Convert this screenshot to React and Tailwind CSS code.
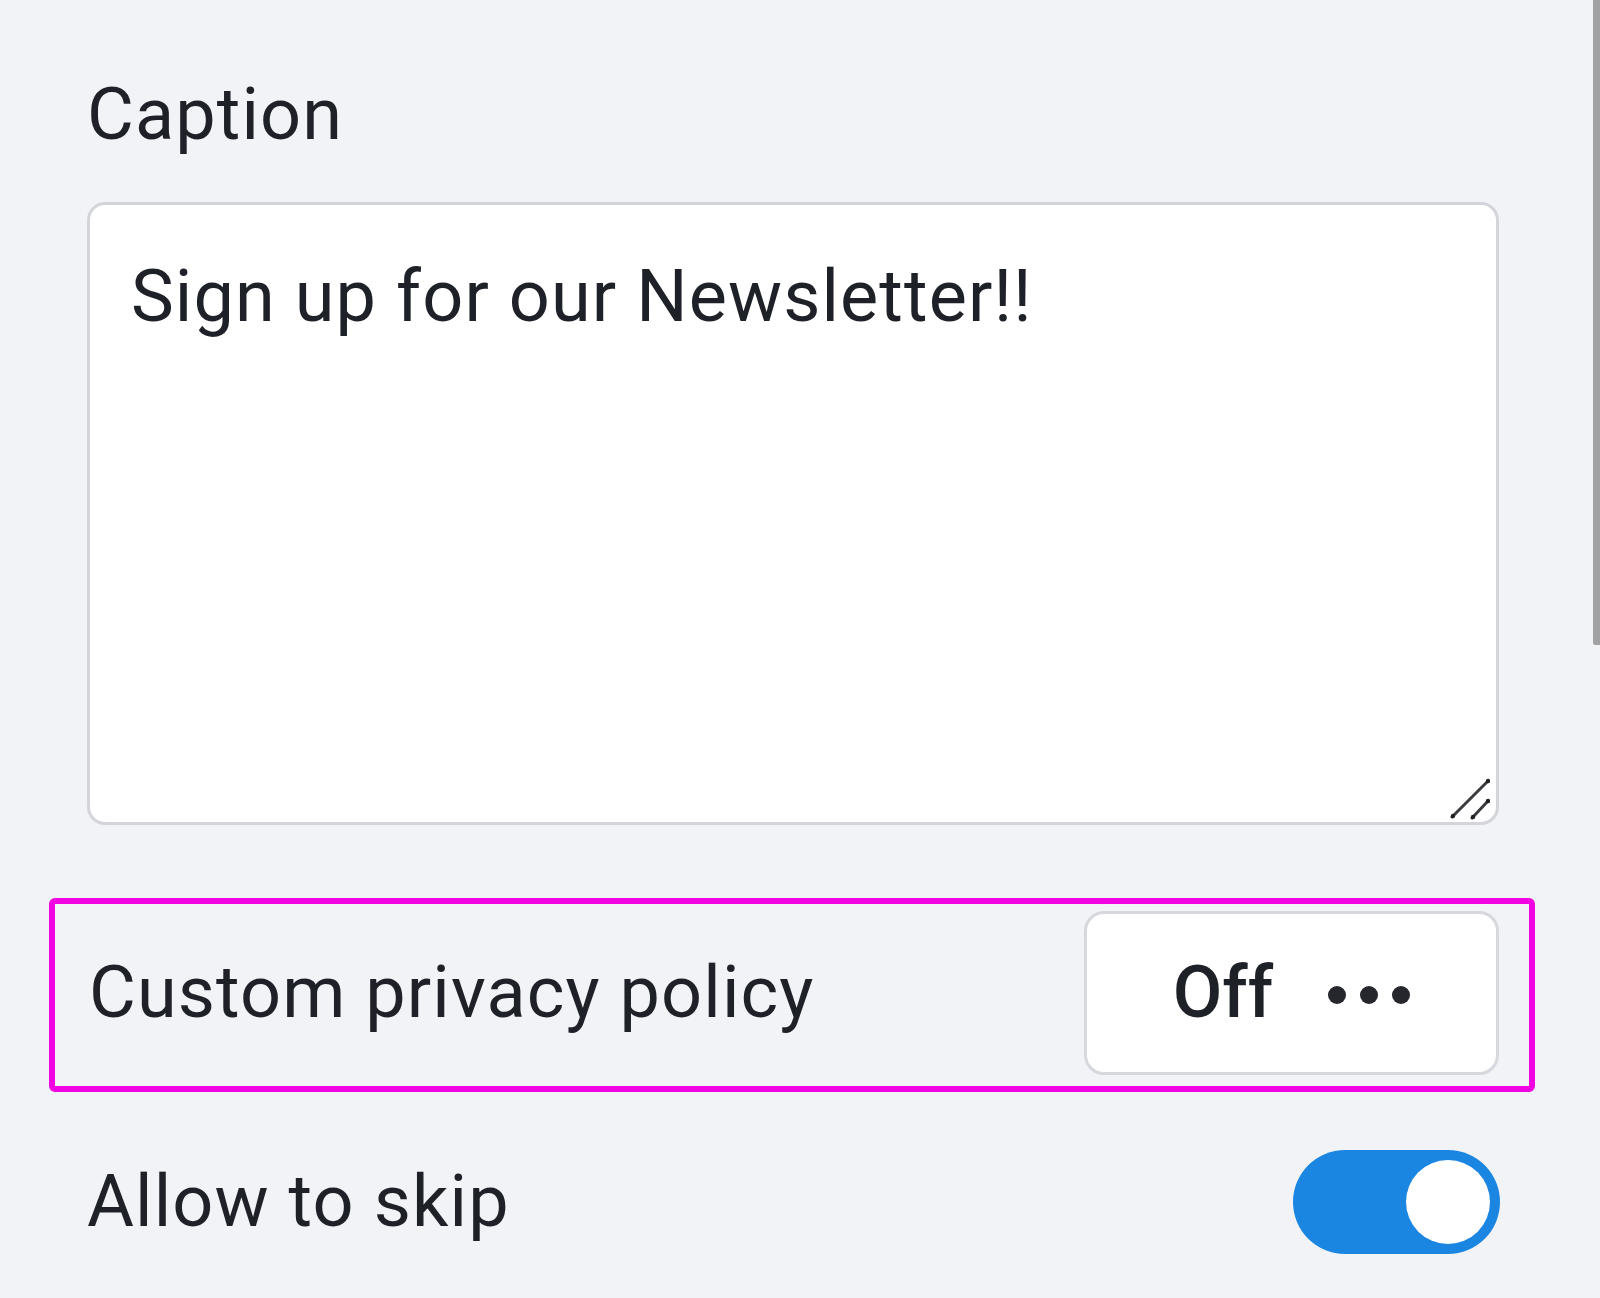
import React from "react";

export default function App() {
  return (
    <div
      className="relative w-full h-[1298px] overflow-hidden bg-[#f2f3f7] text-[#1f2128]"
      style={{ fontFamily: "Roboto, 'Noto Sans', Arial, sans-serif" }}
    >
      <div className="ml-[87px] w-[1412px] pt-[73px] flex flex-col">
        <div className="text-[72px] leading-[84px] tracking-[1.1px]">Caption</div>

        <div className="relative mt-[45px] h-[623px]">
          <textarea
            className="block w-full h-full resize-none bg-white border-[3px] border-[#d3d5db] rounded-[18px] pl-[41px] pr-[40px] pt-[50px] text-[72px] leading-[84px] tracking-[1.1px] text-[#1f2128] outline-none"
            defaultValue="Sign up for our Newsletter!!"
          />
          <svg
            className="absolute right-[9px] bottom-[5px] pointer-events-none"
            width="40"
            height="42"
            viewBox="0 0 40 42"
            fill="none"
          >
            <line x1="2" y1="39" x2="38" y2="3" stroke="#3a3b3e" strokeWidth="3" strokeLinecap="round" />
            <line x1="22" y1="40" x2="38" y2="23" stroke="#3a3b3e" strokeWidth="3" strokeLinecap="round" />
            <circle cx="38" cy="3" r="2.2" fill="#222" />
            <circle cx="38" cy="23" r="2.2" fill="#222" />
            <circle cx="3" cy="38" r="2.2" fill="#222" />
            <circle cx="23" cy="39" r="2.2" fill="#222" />
          </svg>
        </div>

        <div className="mt-[73px] ml-[-38px] mr-[-36px] border-[6px] border-[#f203e2] rounded-[6px] pl-[34px] pr-[30px] pt-[7px] pb-[11px] flex items-center justify-between">
          <span className="text-[72px] leading-[84px] tracking-[1.1px]">Custom privacy policy</span>
          <button className="w-[415px] h-[164px] bg-white border-[3px] border-[#d6d8de] rounded-[20px] flex items-center justify-center gap-[55px]">
            <span className="text-[72px] leading-[84px] font-medium text-[#1f2128]">Off</span>
            <span className="flex items-center gap-[14px] mt-[4px]">
              <span className="w-[18px] h-[18px] rounded-full bg-[#25272c]" />
              <span className="w-[18px] h-[18px] rounded-full bg-[#25272c]" />
              <span className="w-[18px] h-[18px] rounded-full bg-[#25272c]" />
            </span>
          </button>
        </div>

        <div className="mt-[58px] flex items-center justify-between">
          <span className="text-[72px] leading-[84px] tracking-[1.1px]">Allow to skip</span>
          <div className="w-[207px] h-[104px] rounded-full bg-[#1a86e2] p-[10px] flex justify-end items-center mr-[-1px]">
            <div className="w-[84px] h-[84px] rounded-full bg-white" />
          </div>
        </div>
      </div>

      <div className="absolute right-0 top-0 w-[7px] h-[645px] bg-[#a2a2a5] rounded-bl-[2px]" />
    </div>
  );
}
